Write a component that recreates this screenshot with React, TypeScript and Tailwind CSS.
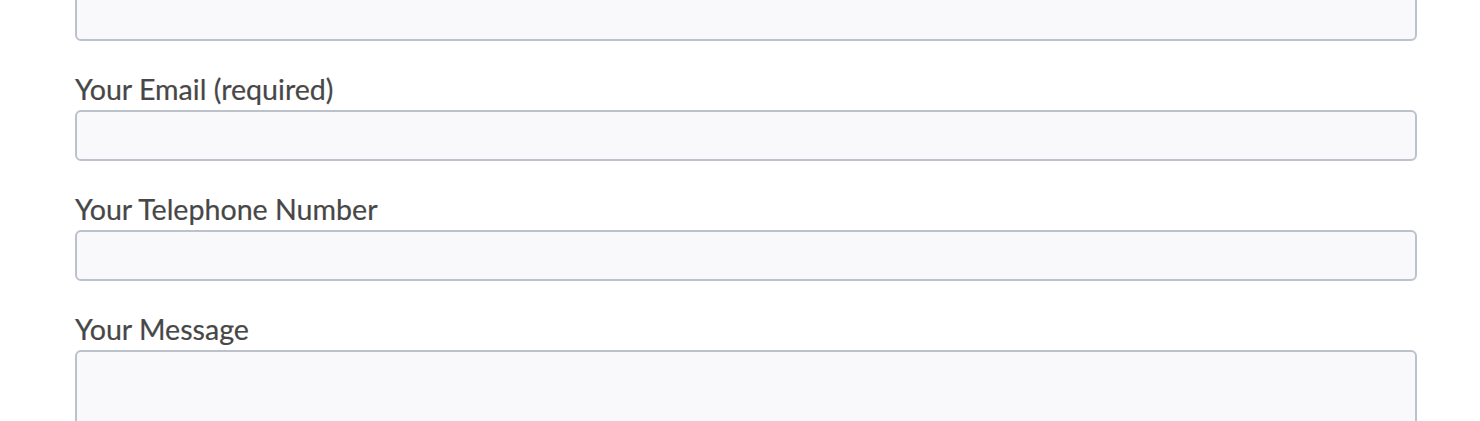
export default function App() {
  const fields = [
    { label: 'Your Email (required)', multi: false },
    { label: 'Your Telephone Number', multi: false },
    { label: 'Your Message', multi: true },
  ];

  return (
    <div className="h-[421px] overflow-hidden bg-white font-['Lato',sans-serif] text-[#474747]">
      <form className="ml-[75px] w-[1342px]">
        <input
          type="text"
          className="-mt-[10px] block h-[51px] w-full rounded-[6px] border-2 border-[#bcc2cb] bg-[#f9f9fb]"
        />
        {fields.map((f) => (
          <div key={f.label} className="mt-[31px]">
            <label className="mb-[4px] block text-[28.6px] leading-[34px] [-webkit-text-stroke:0.2px_#474747]">
              {f.label}
            </label>
            {f.multi ? (
              <textarea className="block h-[200px] w-full resize-none rounded-[6px] border-2 border-[#bcc2cb] bg-[#f9f9fb]" />
            ) : (
              <input
                type="text"
                className="block h-[51px] w-full rounded-[6px] border-2 border-[#bcc2cb] bg-[#f9f9fb]"
              />
            )}
          </div>
        ))}
      </form>
    </div>
  );
}
